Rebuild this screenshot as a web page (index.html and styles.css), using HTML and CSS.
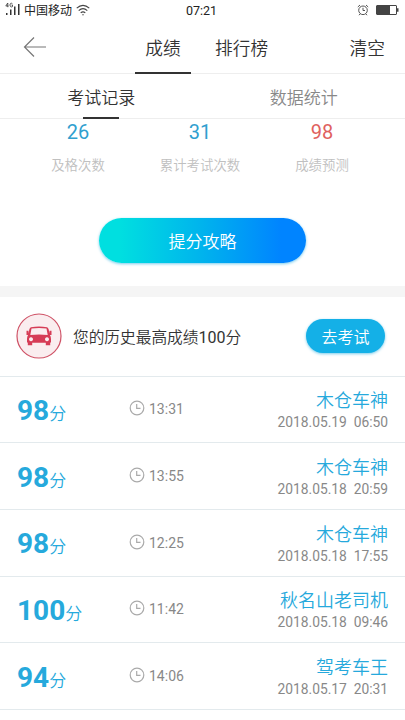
FILE: index.html
```
<!DOCTYPE html>
<html lang="zh-CN">
<head>
<meta charset="utf-8">
<title>成绩</title>
<link rel="stylesheet" href="styles.css">
</head>
<body>
<svg class="defs" width="0" height="0" aria-hidden="true">
  <symbol id="clock" viewBox="0 0 16 16"><circle cx="8" cy="8" r="6.8"/><path d="M7.7 4v4.4h3.8"/></symbol>
</svg>
<header class="status">
  <svg class="signal" width="18" height="15" viewBox="0 0 18 15"><path d="M2.7 1 .8 4h2.7M2.8 1v4.2M7.4 1.7C6 .6 5 1.5 5 3s1 2.500 2.500 1.600V3H6.500" fill="none" stroke="#333" stroke-width=".8"/><path d="M1 11h1.500v2H1zM5 7.500h1.500V13H5zM9 4.500h1.500V13H9zM13 2h1.500v11H13z" fill="#333"/></svg>
  <span class="carrier">中国移动</span>
  <svg class="wifi" width="14" height="12" viewBox="0 0 14 12" fill="none" stroke="#444" stroke-width="1.100"><path d="M.7 4.200q6.300-5.700 12.600 0M2.700 6.600q4.300-3.900 8.600 0M4.700 8.900q2.300-2.100 4.600 0"/><circle cx="7" cy="10.700" r=".7" fill="#444" stroke="none"/></svg>
  <span class="now">07:21</span>
  <svg class="alarm" width="12" height="12" viewBox="0 0 12 12" fill="none" stroke="#555"><circle cx="6" cy="6.300" r="4.300"/><path d="M.8 3 3 1M11.200 3 9 1M6 3.800v2.700h2M3 10l-1 1.200M9 10l1 1.200"/></svg>
  <svg class="battery" width="23" height="11" viewBox="0 0 23 11"><rect x=".5" y=".5" width="20" height="9" rx=".5" fill="#fff" stroke="#444"/><path d="M1 1h13v8H1zM21 3.200h1.500v3.600H21z" fill="#444"/></svg>
</header>
<nav class="topbar">
  <svg class="back" width="24" height="22" viewBox="0 0 24 22"><path d="M23 11H1.500M11 1.500 1.500 11l9.500 9.500" fill="none" stroke="#777" stroke-width="1.200"/></svg>
  <span class="top-tab current">成绩</span>
  <span class="top-tab">排行榜</span>
  <span class="clear">清空</span>
</nav>
<nav class="tabs">
  <div class="tab"><span class="tab-label selected">考试记录</span></div>
  <div class="tab"><span class="tab-label">数据统计</span></div>
</nav>
<section class="summary">
  <div class="stats">
    <div class="stat"><b>26</b><span>及格次数</span></div>
    <div class="stat"><b>31</b><span>累计考试次数</span></div>
    <div class="stat warn"><b>98</b><span>成绩预测</span></div>
  </div>
  <div class="tips">提分攻略</div>
</section>
<section class="best">
  <svg class="car" width="46" height="46" viewBox="0 0 46 46"><circle cx="23" cy="23" r="22" fill="#faedef" stroke="#cf5266" stroke-width="1.200"/><path fill="#d63c56" fill-rule="evenodd" d="M15 14.300Q23 12.600 31 14.300Q32.200 14.700 32.700 16.500L33.500 20.500V17.700H35.500V22H33.900Q35 23.500 35 26V29.500H34.200V32.300H29.800V29.800H16.200V32.300H11.800V29.500H11V26Q11 23.500 12.100 22H10.500V17.700H12.500V20.500L13.300 16.500Q13.800 14.700 15 14.300ZM15.500 15.600 14.300 22Q23 20.800 31.700 22L30.500 15.600Q23 14.300 15.500 15.600ZM15 24.300a2 2 0 1 0 .01 0ZM31 24.300a2 2 0 1 0 .01 0Z"/></svg>
  <span class="best-text">您的历史最高成绩<span class="digits">100</span>分</span>
  <span class="go">去考试</span>
</section>
<main class="records">
  <article class="row"><div class="score"><b>98</b>分</div><div class="duration"><svg class="clock"><use href="#clock"/></svg>13:31</div><div class="result"><strong>木仓车神</strong><time>2018.05.19&nbsp; 06:50</time></div></article>
  <article class="row"><div class="score"><b>98</b>分</div><div class="duration"><svg class="clock"><use href="#clock"/></svg>13:55</div><div class="result"><strong>木仓车神</strong><time>2018.05.18&nbsp; 20:59</time></div></article>
  <article class="row"><div class="score"><b>98</b>分</div><div class="duration"><svg class="clock"><use href="#clock"/></svg>12:25</div><div class="result"><strong>木仓车神</strong><time>2018.05.18&nbsp; 17:55</time></div></article>
  <article class="row"><div class="score"><b>100</b>分</div><div class="duration"><svg class="clock"><use href="#clock"/></svg>11:42</div><div class="result"><strong>秋名山老司机</strong><time>2018.05.18&nbsp; 09:46</time></div></article>
  <article class="row"><div class="score"><b>94</b>分</div><div class="duration"><svg class="clock"><use href="#clock"/></svg>14:06</div><div class="result"><strong>驾考车王</strong><time>2018.05.17&nbsp; 20:31</time></div></article>
</main>
</body>
</html>
```
FILE: styles.css
```
* { box-sizing: border-box; }
body { margin: 0; height: 720px; overflow: hidden; background: #fff; color: #333; font-family: "Noto Sans CJK SC", sans-serif; font-weight: 350; }
svg { display: block; flex: none; }
.defs { position: absolute; }
.status { display: flex; height: 22px; padding-left: 5px; line-height: 20px; font-size: 12px; font-weight: 400; color: #222; }
.signal { margin-top: 2px; }
.carrier { width: 49px; margin-left: 1px; }
.wifi { margin: 4px 0 0 3px; }
.now { width: 32px; margin-left: 96px; font: 400 12.500px/21px Roboto, sans-serif; }
.alarm { margin: 4px 0 0 139px; }
.battery { margin: 5px 0 0 7px; }
.topbar { display: flex; height: 52px; border-bottom: 1px solid #eee; font-size: 17.700px; line-height: 51px; }
.back { margin: 14px 0 0 23px; }
.top-tab { height: 52px; margin-left: 24px; white-space: nowrap; }
.top-tab.current { width: 56px; margin-left: 88px; text-align: center; border-bottom: 2px solid #333; }
.clear { margin-left: auto; padding-right: 20px; }
.tabs { display: grid; grid-template-columns: 1fr 1fr; height: 45px; border-bottom: 1px solid #eee; text-align: center; }
.tab { display: flex; justify-content: center; }
.tab-label { height: 45px; font-size: 17px; line-height: 46px; color: #888; }
.tab-label.selected { display: flex; flex-direction: column; align-items: center; color: #333; }
.tab-label.selected::after { content: ""; width: 36px; height: 2px; margin-top: -3px; background: #333; }
.summary { height: 167px; }
.stats { display: flex; padding: 0 17px; }
.stat { width: 122px; flex: none; display: flex; flex-direction: column; align-items: center; color: #c0c0c0; font-size: 13.400px; line-height: 20px; }
.stat b { margin-bottom: 8px; color: #319fcf; font: 400 20px/27px Roboto, sans-serif; }
.stat.warn b { color: #df625e; }
.tips { width: 207px; height: 45px; margin: 44px auto 0 99px; border-radius: 23px; background: linear-gradient(90deg, #00dfe0 10%, #00b3ed 50%, #0084ff 88%); box-shadow: 0 1px 3px #78cdec; color: #fff; text-align: center; font-size: 17px; line-height: 45px; }
.best { display: flex; align-items: center; height: 90.500px; padding: 0 20px 0 16px; border-top: 11px solid #f5f5f5; border-bottom: 1px solid #e3eaed; }
.best-text { margin-left: 11px; font-size: 15.700px; }
.digits { font-family: Roboto, sans-serif; font-weight: 400; font-size: 16px; }
.go { width: 79px; height: 34px; margin-left: auto; border-radius: 17px; background: #14b0e7; box-shadow: 0 1px 3px #79cceb; color: #fff; text-align: center; font-size: 16px; line-height: 34px; }
.row { display: flex; align-items: center; height: 66.700px; padding: 0 17px; border-bottom: 1px solid #e3eaed; }
.score { width: 112px; padding-top: 5px; color: #26a9dc; font-size: 17px; line-height: 32px; }
.score b { font: 700 28px/32px Roboto, sans-serif; }
.duration { display: flex; align-items: center; width: 75px; color: #888; font: 400 14px/20px Roboto, sans-serif; }
.clock { width: 16px; height: 16px; margin: -2px 4px 0 0; fill: none; stroke: #aaa; stroke-width: 1.200; }
.result { display: flex; flex: 1; flex-direction: column; align-items: flex-end; }
.result strong { font-size: 18px; line-height: 26px; font-weight: 350; color: #26a9dc; }
.result time { font: 400 13.800px/20px Roboto, sans-serif; color: #888; }
```
